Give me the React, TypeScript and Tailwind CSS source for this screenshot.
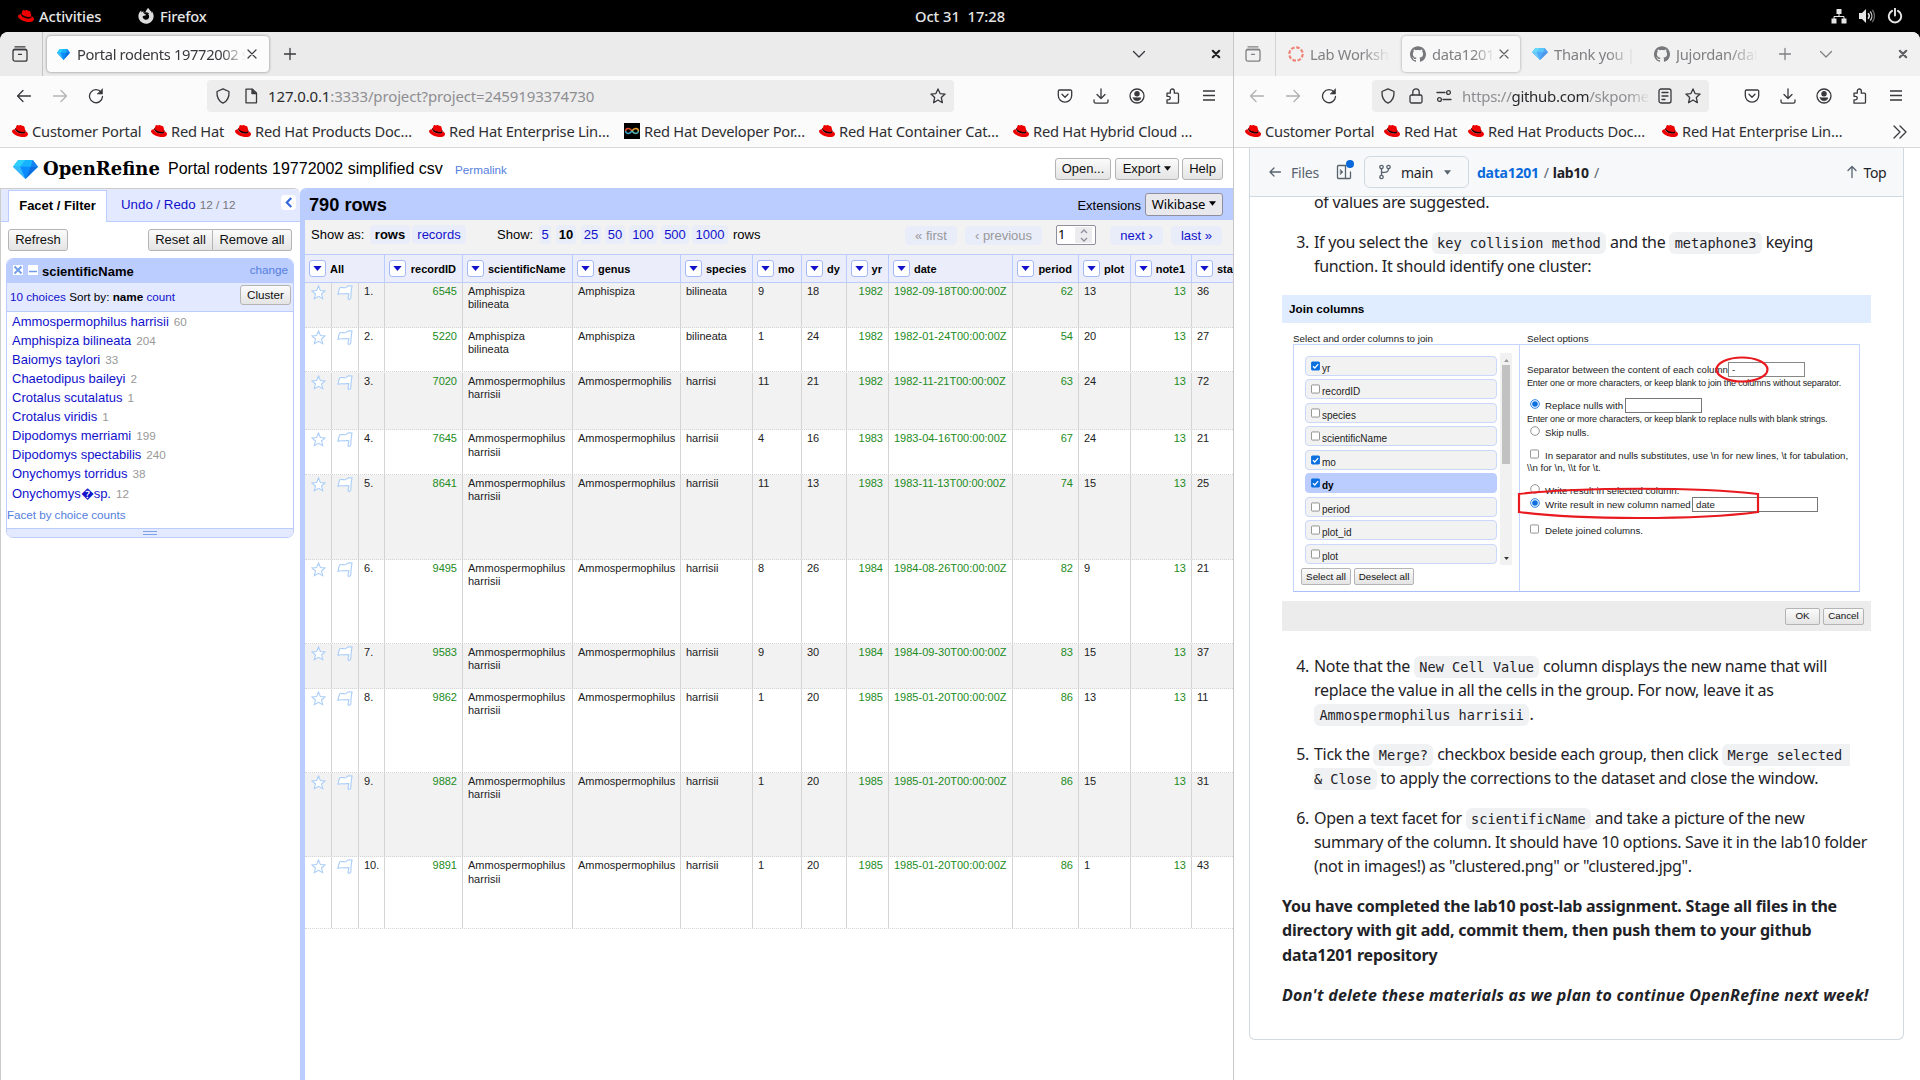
import React from "react";
import { FaFirefoxBrowser } from "react-icons/fa";
import { SiGithub } from "react-icons/si";

type P = { className?: string };

function Hat({ className = "" }: P) {
  return (
    <svg viewBox="0 0 24 24" className={`w-4 h-4 shrink-0 ${className}`}>
      <path d="M4.6 9C4.6 13 11 16.2 16 16.2c2.6 0 4.4-1 4.4-2.8L20 10.500 5 7.500z" fill="#1a0000" />
      <path
        fill="#ee0000"
        d="M16.009 13.386c1.577 0 3.86-.326 3.86-2.202a1.765 1.765 0 0 0-.04-.431l-.94-4.08c-.216-.898-.406-1.305-1.982-2.093-1.223-.625-3.888-1.658-4.676-1.658-.733 0-.947.946-1.822.946-.842 0-1.467-.706-2.255-.706-.757 0-1.25.515-1.63 1.576 0 0-1.06 2.99-1.197 3.424a.81.81 0 0 0-.028.245c0 1.162 4.577 4.974 10.71 4.974m4.101-1.435c.218 1.032.218 1.14.218 1.277 0 1.765-1.984 2.745-4.593 2.745-5.895.004-11.06-3.451-11.06-5.734a2.326 2.326 0 0 1 .19-.925C2.746 9.415 0 9.794 0 12.217c0 3.969 9.405 8.861 16.851 8.861 5.71 0 7.149-2.582 7.149-4.62 0-1.605-1.387-3.425-3.887-4.512"
      />
    </svg>
  );
}

function Diamond({ className = "" }: P) {
  return (
    <svg viewBox="0 0 24 20" preserveAspectRatio="none" className={`shrink-0 ${className}`}>
      <path d="M5 0h14l5 7-12 13L0 7z" fill="#1e9bff" />
      <path d="M5 0h7L7 7H0z" fill="#2bd0fb" />
      <path d="M12 0h7l-2 7H7z" fill="#16b4ff" />
      <path d="M19 0l5 7h-7z" fill="#1783f0" />
      <path d="M0 7h7l5 13z" fill="#35b9ff" />
      <path d="M7 7h10l-5 13z" fill="#0a8cff" />
      <path d="M17 7h7L12 20z" fill="#0b6fe0" />
    </svg>
  );
}

function Ic({ children, className = "", w = 1.3 }: { children: React.ReactNode; className?: string; w?: number }) {
  return (
    <svg viewBox="0 0 16 16" fill="none" stroke="currentColor" strokeWidth={w} strokeLinecap="round" strokeLinejoin="round" className={`w-4 h-4 shrink-0 ${className}`}>
      {children}
    </svg>
  );
}
const ViewIcon = (p: P) => (
  <Ic {...p}><path d="M3 .8h10M1.800 3.500h12.400" /><rect x="1" y="3.500" width="14" height="11.700" rx="2" /><path d="M6.500 8.300h3" /></Ic>
);
const Back = (p: P) => <Ic {...p}><path d="M1.500 8h13M7 2.500L1.500 8 7 13.500" /></Ic>;
const Fwd = (p: P) => <Ic {...p}><path d="M1.500 8h13M9 2.500L14.500 8 9 13.500" /></Ic>;
const Reload = (p: P) => (
  <Ic {...p}><path d="M13.200 4.300A6.500 6.500 0 1 0 14.500 8.500" /><path d="M14.500 1v5h-5z" fill="currentColor" strokeWidth={0.6} /></Ic>
);
const Shield = (p: P) => <Ic {...p}><path d="M8 .8l6 2.700c.3 5-1.200 9.500-6 11.700C3.200 13 1.700 8.500 2 3.500z" /></Ic>;
const Doc = (p: P) => <Ic {...p}><path d="M3 1.200h6.500L13.500 5v9.800H3z" /><path d="M9 1.500v4h4" fill="currentColor" /></Ic>;
const Lock = (p: P) => <Ic {...p}><rect x="2" y="7" width="12" height="8" rx="1.500" /><path d="M4.800 7V4a3.200 3.200 0 0 1 6.400 0v3" /></Ic>;
const Perm = (p: P) => (
  <Ic {...p}><path d="M1 4.500h8M7 11.500h8" /><circle cx="12.500" cy="4.500" r="1.900" /><circle cx="3.500" cy="11.500" r="1.900" /></Ic>
);
const Star = (p: P) => (
  <Ic {...p}><path d="M8 .9l2.100 4.700 5 .5-3.800 3.400 1.100 5.200L8 12l-4.400 2.700 1.100-5.200L.9 6.100l5-.5z" /></Ic>
);
const Pocket = (p: P) => <Ic {...p}><path d="M2.500 2h11a1.200 1.200 0 0 1 1.200 1.200V7.500a6.700 6.700 0 0 1-13.400 0V3.200A1.200 1.200 0 0 1 2.500 2z" /><path d="M5 6.300l3 3 3-3" /></Ic>;
const Down = (p: P) => <Ic {...p}><path d="M8 .8v9.500M4 6.500l4 4 4-4M1 12v1.500a1.700 1.700 0 0 0 1.700 1.700h10.600A1.700 1.700 0 0 0 15 13.500V12" /></Ic>;
const Account = (p: P) => (
  <Ic {...p}><circle cx="8" cy="8" r="7" /><circle cx="8" cy="5.800" r="2.100" fill="currentColor" /><path d="M4.200 9.800h7.600c-.3 2-1.800 3-3.800 3s-3.500-1-3.800-3z" fill="currentColor" strokeWidth={0.6} /></Ic>
);
const Ext = (p: P) => (
  <Ic {...p}><path d="M2 5.200h3.300V3a2 2 0 1 1 4 0v2.200h3.200a1 1 0 0 1 1 1v8a1 1 0 0 1-1 1H2v-3.400h1.500a1.700 1.700 0 0 0 0-3.500H2z" /></Ic>
);
const Menu = (p: P) => <Ic {...p}><path d="M2 3h12M2 7.500h12M2 12h12" strokeLinecap="butt" /></Ic>;
const Plus = (p: P) => <Ic {...p}><path d="M2.500 8h11M8 2.500v11" /></Ic>;
const Chev = (p: P) => <Ic {...p}><path d="M2.500 5.500L8 11l5.500-5.500" /></Ic>;
const X = (p: P) => <Ic w={1.2} {...p}><path d="M4 4l8 8M12 4l-8 8" /></Ic>;
const XB = (p: P) => <Ic w={2.2} {...p}><path d="M4.800 4.800l6.400 6.400M11.200 4.800l-6.400 6.400" /></Ic>;

function Bookmark({ label, dark, className = "" }: { label: string; dark?: boolean; className?: string }) {
  return (
    <div className={`flex items-center gap-1 shrink-0 text-[14.700px] tracking-[-0.230px] text-[#2f2f33] ${className}`}>
      {dark ? (
        <svg viewBox="0 0 16 16" className="w-4 h-4 shrink-0">
          <rect width="16" height="16" fill="#000" />
          <path d="M8 8C6 5 2 4.500 1.600 8" fill="none" stroke="#e8502f" strokeWidth="1.400" />
          <path d="M1.600 8c.4 3.500 4.400 3 6.400 0" fill="none" stroke="#3aa6c9" strokeWidth="1.400" />
          <path d="M8 8c2-3 6-3.500 6.400 0" fill="none" stroke="#f0a432" strokeWidth="1.400" />
          <path d="M14.400 8c-.4 3.500-4.400 3-6.400 0" fill="none" stroke="#57b8b0" strokeWidth="1.400" />
        </svg>
      ) : (
        <Hat />
      )}
      <span className="whitespace-nowrap">{label}</span>
    </div>
  );
}

function TopBar() {
  return (
    <div className="h-8 bg-black text-[#e6e6e6] text-[14.700px] font-medium grid grid-cols-[1fr_auto_1fr] items-center shrink-0">
      <div className="flex items-center pl-[18px]">
        <Hat />
        <span className="ml-[5px] w-[99px] tracking-[-0.100px]">Activities</span>
        <FaFirefoxBrowser className="w-4 h-4 text-[#dcdcdc]" />
        <span className="ml-[6px] tracking-[-0.200px]">Firefox</span>
      </div>
      <span className="whitespace-pre">Oct 31  17:28</span>
      <div className="flex items-center justify-end gap-3 pr-[17px]">
        <svg viewBox="0 0 16 16" className="w-4 h-4"><path d="M5.500 1h5v5h-5zM.500 10.500h5v5h-5zM10.500 10.500h5v5h-5z" fill="#e6e6e6" /><path d="M8 5v4M3 11V8.500h10V11" fill="none" stroke="#e6e6e6" /></svg>
        <svg viewBox="0 0 16 16" className="w-4 h-4"><path d="M0 5h3l4-4v14l-4-4H0z" fill="#e6e6e6" /><path d="M9 5.300a4 4 0 0 1 0 5.400" fill="none" stroke="#e6e6e6" strokeWidth="1.600" /><path d="M11.200 3.500a7 7 0 0 1 0 9" fill="none" stroke="#bdbdbd" strokeWidth="1.400" /><path d="M13.300 1.800a10 10 0 0 1 0 12.400" fill="none" stroke="#6a6a6a" strokeWidth="1.300" /></svg>
        <svg viewBox="0 0 16 16" className="w-4 h-4"><path d="M5 2.800a6.200 6.200 0 1 0 6 0M8 .5v7" fill="none" stroke="#e6e6e6" strokeWidth="1.900" strokeLinecap="round" /></svg>
      </div>
    </div>
  );
}

const fade = "shrink-0 tracking-[-0.250px] overflow-hidden whitespace-nowrap [mask-image:linear-gradient(to_right,#000_65%,transparent)]";

function LeftChrome() {
  return (
    <div className="shrink-0 text-[#38383d]">
      <div className="flex h-11 items-center bg-[#ebebeb] rounded-tl-lg">
        <div className="w-[43px] h-full pl-3 flex items-center border-r border-[#c4c4c4]"><ViewIcon /></div>
        <div className="ml-1 w-[222px] h-9 rounded bg-[#fcfcfc] shadow-[0_0_3px_rgba(0,0,0,0.450)] flex items-center pl-[10px]">
          <Diamond className="w-[13px] h-[11px]" />
          <div className="ml-[7px] w-[169px] shrink-0 text-[14.700px] tracking-[-0.350px] overflow-hidden whitespace-nowrap [mask-image:linear-gradient(to_right,#000_85%,transparent)]">Portal rodents 19772002 si</div>
          <X className="-ml-[2px]" />
        </div>
        <Plus className="ml-[13px]" />
        <Chev className="ml-auto" />
        <XB className="ml-[61px] mr-[9px] text-[#222]" />
      </div>
      <div className="flex h-10 items-center bg-[#fbfbfb] pl-4 pr-4">
        <Back />
        <Fwd className="ml-5 text-[#b5b5b8]" />
        <Reload className="ml-5" />
        <div className="ml-[103px] w-[747px] h-8 rounded bg-[#ededed] flex items-center pl-2">
          <Shield />
          <Doc className="ml-3" />
          <div className="ml-[9px] text-[15px] tracking-[-0.140px] whitespace-nowrap">
            <span className="text-[#2a2a2e]">127.0.0.1</span><span className="text-[#8e8e92]">:3333/project?project=2459193374730</span>
          </div>
          <Star className="ml-auto mr-2" />
        </div>
        <div className="flex gap-5 ml-auto"><Pocket /><Down /><Account /><Ext /><Menu /></div>
      </div>
      <div className="flex h-8 items-center bg-[#fbfbfb] border-b border-[#d9d9d9] pl-3">
        <Bookmark label="Customer Portal" className="w-[139px]" />
        <Bookmark label="Red Hat" className="w-[84px]" />
        <Bookmark label="Red Hat Products Doc…" className="w-[194px]" />
        <Bookmark label="Red Hat Enterprise Lin…" className="w-[195px]" />
        <Bookmark label="Red Hat Developer Por…" className="w-[195px]" dark />
        <Bookmark label="Red Hat Container Cat…" className="w-[194px]" />
        <Bookmark label="Red Hat Hybrid Cloud …" />
      </div>
    </div>
  );
}

function Btn({ children, size = "h-[22px] text-[13px] rounded-[3px]", className = "" }: { children: React.ReactNode; size?: string; className?: string }) {
  return (
    <div className={`flex items-center justify-center border border-[#b4b4b4] bg-gradient-to-b from-[#fbfbfb] to-[#e4e4e4] text-[#111] whitespace-nowrap shrink-0 ${size} ${className}`}>
      {children}
    </div>
  );
}
const small = "h-[17px] text-[9.800px] rounded-[2px]";
const Caret = ({ className = "" }: P) => (
  <svg viewBox="0 0 8 5" className={`w-[7px] h-[5px] ${className}`}><path d="M0 0h8L4 5z" fill="currentColor" /></svg>
);

const choices: [string, string][] = [
  ["Ammospermophilus harrisii", "60"], ["Amphispiza bilineata", "204"], ["Baiomys taylori", "33"], ["Chaetodipus baileyi", "2"],
  ["Crotalus scutalatus", "1"], ["Crotalus viridis", "1"], ["Dipodomys merriami", "199"], ["Dipodomys spectabilis", "240"],
  ["Onychomys torridus", "38"], ["Onychomys\uFFFDsp.", "12"],
];

function FacetPanel() {
  return (
    <div className="w-[300px] shrink-0 border-l border-t border-[#ccc] rounded-tr-md flex flex-col">
      <div className="flex h-[33px] bg-[#e3e9ff] border-b border-[#bbccff] shrink-0 rounded-tr-md">
        <div className="ml-[7px] mt-[1px] w-[99px] h-8 bg-white border border-b-0 border-[#bbccff] flex items-center justify-center text-[13px] font-bold pb-px">Facet / Filter</div>
        <div className="ml-[14px] flex items-center text-[13.300px] text-[#1111cc]">Undo / Redo<span className="ml-1 text-[11.700px] text-[#777]">12 / 12</span></div>
        <div className="ml-auto mr-[4px] mt-[6px] w-[15px] h-[15px] bg-white rounded-sm flex items-center justify-center">
          <svg viewBox="0 0 9 12" className="w-[8px] h-[11px]"><path d="M7 1L2 6l5 5" fill="none" stroke="#3366dd" strokeWidth="2.400" /></svg>
        </div>
      </div>
      <div className="flex mt-[7px] pl-[7px] pr-[8px]">
        <Btn className="w-[60px]">Refresh</Btn>
        <Btn className="w-[65px] ml-auto rounded-r-none">Reset all</Btn>
        <Btn className="w-[79px] rounded-l-none border-l-0">Remove all</Btn>
      </div>
      <div className="mt-[7px] ml-[5px] w-[288px] h-[280px] rounded-[7px] border border-[#bbccff] flex flex-col overflow-hidden">
        <div className="h-6 bg-[#bbccff] flex items-center pl-[6px] pr-[5px] shrink-0">
          <svg viewBox="0 0 10 10" className="w-[10px] h-[10px] -mt-[3px]"><rect width="10" height="10" fill="#fff" /><path d="M1.500 1.500l7 7M8.500 1.500l-7 7" stroke="#6f9be8" strokeWidth="1.800" /></svg>
          <svg viewBox="0 0 10 10" className="w-[10px] h-[10px] ml-[5px] -mt-[3px]"><rect width="10" height="10" fill="#fff" /><path d="M1 6.500h8" stroke="#6f9be8" strokeWidth="1.600" /></svg>
          <span className="ml-[4px] mt-px text-[13px] font-bold">scientificName</span>
          <span className="ml-auto -mt-[2px] text-[11.700px] text-[#5580dd]">change</span>
        </div>
        <div className="h-[29px] bg-[#e3e9ff] border-b border-[#bbccff] flex items-center pl-[3px] pr-[2px] text-[11.700px] shrink-0">
          <span className="whitespace-pre"><span className="text-[#1111cc]">10 choices</span> Sort by: <b>name</b> <span className="text-[#1111cc]">count</span></span>
          <Btn className="ml-auto -mt-[4px] w-[51px]" size="h-[20px] text-[11.700px] rounded-[3px]">Cluster</Btn>
        </div>
        <div className="pl-[5px] text-[13px]">
          {choices.map(([n, c], i) => (
            <div key={n} className={`h-[19px] leading-[19px] text-[#1111cc] whitespace-nowrap ${i === 9 ? "mt-px" : ""}`}>
              {n}<span className="ml-[5px] text-[11.700px] text-[#999]">{c}</span>
            </div>
          ))}
        </div>
        <div className="mt-[4px] text-[11.700px] leading-4 text-[#5580dd] tracking-[-0.050px]">Facet by choice counts</div>
        <div className="mt-auto h-[9px] bg-[#e3e9ff] border-t border-[#bbccff] flex flex-col items-center gap-[2px] pt-[2px] shrink-0">
          <div className="w-[14px] h-px bg-[#7fa3ea]" /><div className="w-[14px] h-px bg-[#7fa3ea]" />
        </div>
      </div>
    </div>
  );
}

const cols: { n: string; w: string; r?: boolean }[] = [
  { n: "recordID", w: "w-[78px]", r: true }, { n: "scientificName", w: "w-[110px]" }, { n: "genus", w: "w-[108px]" },
  { n: "species", w: "w-[72px]" }, { n: "mo", w: "w-[49px]" }, { n: "dy", w: "w-[45px]" }, { n: "yr", w: "w-[42px]", r: true },
  { n: "date", w: "w-[124px]" }, { n: "period", w: "w-[66px]", r: true }, { n: "plot", w: "w-[52px]" },
  { n: "note1", w: "w-[61px]", r: true }, { n: "station", w: "w-[80px]" },
];
const green = new Set([0, 6, 7, 8, 10]);
const A = "Ammospermophilus";
const rows: { h: string; v: string[]; lh?: string }[] = [
  { h: "h-[45px]", v: ["6545", "Amphispiza bilineata", "Amphispiza", "bilineata", "9", "18", "1982", "1982-09-18T00:00:00Z", "62", "13", "13", "36"] },
  { h: "h-[44px]", v: ["5220", "Amphispiza bilineata", "Amphispiza", "bilineata", "1", "24", "1982", "1982-01-24T00:00:00Z", "54", "20", "13", "27"] },
  { h: "h-[58px] pt-px", v: ["7020", A + " harrisii", "Ammospermophilis", "harrisi", "11", "21", "1982", "1982-11-21T00:00:00Z", "63", "24", "13", "72"] },
  { h: "h-[45px]", lh: "leading-[14px] -mt-px", v: ["7645", A + " harrisii", A, "harrisii", "4", "16", "1983", "1983-04-16T00:00:00Z", "67", "24", "13", "21"] },
  { h: "h-[85px]", v: ["8641", A + " harrisii", A, "harrisii", "11", "13", "1983", "1983-11-13T00:00:00Z", "74", "15", "13", "25"] },
  { h: "h-[84px]", v: ["9495", A + " harrisii", A, "harrisii", "8", "26", "1984", "1984-08-26T00:00:00Z", "82", "9", "13", "21"] },
  { h: "h-[45px]", v: ["9583", A + " harrisii", A, "harrisii", "9", "30", "1984", "1984-09-30T00:00:00Z", "83", "15", "13", "37"] },
  { h: "h-[84px]", v: ["9862", A + " harrisii", A, "harrisii", "1", "20", "1985", "1985-01-20T00:00:00Z", "86", "13", "13", "11"] },
  { h: "h-[84px]", v: ["9882", A + " harrisii", A, "harrisii", "1", "20", "1985", "1985-01-20T00:00:00Z", "86", "15", "13", "31"] },
  { h: "h-[72px]", lh: "leading-[14px] -mt-px", v: ["9891", A + " harrisii", A, "harrisii", "1", "20", "1985", "1985-01-20T00:00:00Z", "86", "1", "13", "43"] },
];

function DropBtn() {
  return (
    <div className="w-[17px] h-[17px] shrink-0 rounded-[3px] border border-[#a3b8f5] bg-white flex items-center justify-center">
      <svg viewBox="0 0 10 6" className="w-[9px] h-[5px]"><path d="M0 0h10L5 6z" fill="#1111cc" /></svg>
    </div>
  );
}

const pill = "h-[19px] rounded-[4px] bg-[#e9edf9] flex items-center justify-center text-[#1111cc] shrink-0";

function DataPanel() {
  return (
    <div className="flex-1 min-w-0 flex flex-col border-l-[5px] border-[#bbccff] rounded-tl-md overflow-hidden text-[13px]">
      <div className="h-8 bg-[#bbccff] flex items-center pl-[4px] pr-[10px] shrink-0">
        <span className="text-[18.200px] font-bold mt-[3px]">790 rows</span>
        <span className="ml-auto mt-[3px]">Extensions</span>
        <div className="ml-1 w-[78px] h-[23px] rounded-[3px] border border-[#8f8f9d] bg-[#e9e9ed] flex items-center justify-center gap-1 font-['Noto_Sans',sans-serif] text-[13px] tracking-[-0.150px] mt-[1px]">Wikibase<Caret className="-mt-0.5" /></div>
      </div>
      <div className="h-[34px] bg-[#f2f2f2] flex items-center shrink-0 pl-[6px] pr-[11px] pb-[5px] whitespace-nowrap">
        <span className="w-[59px]">Show as:</span>
        <div className={`${pill} w-[40px] !text-black font-bold`}>rows</div>
        <div className={`${pill} w-[54px] ml-[2px]`}>records</div>
        <span className="ml-[31px] w-[42px]">Show:</span>
        <div className={`${pill} w-[12px]`}>5</div>
        <div className={`${pill} w-[20px] ml-[5px] !text-black font-bold`}>10</div>
        <div className={`${pill} w-[20px] ml-[5px]`}>25</div>
        <div className={`${pill} w-[20px] ml-[4px]`}>50</div>
        <div className={`${pill} w-[28px] ml-[4px]`}>100</div>
        <div className={`${pill} w-[28px] ml-[4px]`}>500</div>
        <div className={`${pill} w-[36px] ml-[3px]`}>1000</div>
        <span className="ml-[5px]">rows</span>
        <div className={`${pill} w-[52px] ml-auto mt-[2px] !text-[#999]`}>« first</div>
        <div className={`${pill} w-[77px] ml-[8px] mt-[2px] !text-[#999]`}>‹ previous</div>
        <div className="ml-[14px] w-[40px] h-[20px] bg-white border border-[#8f8f9d] rounded-[2px] flex items-center mt-px font-['Noto_Sans',sans-serif] text-[13px] pl-px pr-[3px] shrink-0">
          1
          <div className="ml-auto w-[17px] h-[16px] bg-[#ececee] flex items-center justify-center">
            <svg viewBox="0 0 8 13" className="w-2 h-[13px]"><path d="M1 4l3-3 3 3M1 9l3 3 3-3" fill="none" stroke="#8f8f9d" strokeWidth="1.400" /></svg>
          </div>
        </div>
        <div className={`${pill} w-[53px] ml-[14px] mt-[2px]`}>next ›</div>
        <div className={`${pill} w-[51px] ml-[8px] mt-[2px]`}>last »</div>
      </div>
      <div className="flex h-[29px] shrink-0 border-y border-[#bbccff] bg-[#ebeefa] font-bold text-[11px]">
        <div className="w-[80px] shrink-0 border-r border-[#bbccff] flex items-center pl-1 gap-1">
          <DropBtn /><span className="mt-px">All</span>
        </div>
        {cols.map((c) => (
          <div key={c.n} className={`${c.w} shrink-0 border-r border-[#bbccff] flex items-center pl-1 pr-[6px] ${c.r ? "justify-between" : "gap-[4px]"}`}>
            <DropBtn /><span className="mt-px">{c.n}</span>
          </div>
        ))}
      </div>
      {rows.map((r, i) => (
        <div key={i} className={`flex ${r.h} shrink-0 border-b border-dotted border-[#d5d5d5] text-[11px] leading-[13px] text-[#222] ${i % 2 === 0 && "bg-[#f2f2f2]"}`}>
          <div className="w-[27px] shrink-0 border-r border-[#d4d4d4] flex justify-center pt-[2px]">
            <svg viewBox="0 0 16 16" className="w-[15px] h-[15px]"><path d="M8 1l2 4.900 5 .4-3.800 3.300 1.300 5L8 12l-4.500 2.600 1.300-5L1 6.300l5-.4z" fill="#fff" stroke="#a9cdf8" strokeWidth="1.100" /></svg>
          </div>
          <div className="w-[27px] shrink-0 border-r border-[#d4d4d4] flex justify-center pt-[2px]">
            <svg viewBox="0 0 16 16" className="w-[16px] h-[16px]"><path d="M2.800 2.800C5 1.800 7 3.500 9 2.400L11.500.8l3.500.2-.8 5-.4 6.500c0 1.800-2.800 2.800-2.800.8l.9-4.600L9.700 8.500C7 9.500 4 8 1 9.300L1.600 6z" fill="#fff" stroke="#a9cdf8" strokeWidth="1.100" /></svg>
          </div>
          <div className="w-[26px] shrink-0 border-r border-[#d4d4d4] pl-[5px] pt-[2px]">{i + 1}.</div>
          {cols.map((c, j) => (
            <div key={j} className={`${c.w} shrink-0 border-r border-[#d4d4d4] pl-[5px] pr-[5px] pt-[2px] ${c.r ? "text-right" : ""} ${green.has(j) ? "text-[#228b22]" : ""}`}>
              <div className={r.lh}>{r.v[j]}</div>
            </div>
          ))}
        </div>
      ))}
    </div>
  );
}

function LeftWindow() {
  return (
    <div className="w-[1234px] h-full flex flex-col border-r border-[#c8c8c8] rounded-tl-lg bg-white overflow-hidden">
      <LeftChrome />
      <div className="flex flex-col flex-1 font-['Liberation_Sans',Arial,sans-serif] text-black">
        <div className="h-10 flex items-center pl-[13px] pr-[10px] pt-px shrink-0">
          <Diamond className="w-[25px] h-[19px] mt-[2px]" />
          <span className="ml-[5px] w-[125px] font-['DejaVu_Serif',serif] font-bold text-[18px] -mt-[1px]">OpenRefine</span>
          <span className="text-[16px] w-[287px] whitespace-nowrap">Portal rodents 19772002 simplified csv</span>
          <span className="text-[11.700px] text-[#5580dd] mt-[3px]">Permalink</span>
          <Btn className="w-[56px] ml-auto">Open...</Btn>
          <Btn className="w-[64px] ml-1 gap-1">Export<Caret /></Btn>
          <Btn className="w-[41px] ml-[3px]">Help</Btn>
        </div>
        <div className="flex flex-1 min-h-0">
          <FacetPanel />
          <DataPanel />
        </div>
      </div>
    </div>
  );
}

function RightChrome() {
  return (
    <div className="shrink-0 text-[#38383d]">
      <div className="flex h-11 items-center bg-[#f1f1f1] text-[14.700px] text-[#808084]">
        <div className="w-[42px] h-full pl-[11px] flex items-center border-r border-[#d4d4d4] shrink-0"><ViewIcon /></div>
        <svg viewBox="0 0 16 16" className="w-4 h-4 ml-3 shrink-0"><circle cx="8" cy="8" r="6.700" fill="none" stroke="#ee8578" strokeWidth="2.200" strokeDasharray="3.600 1.660" /></svg>
        <div className={`ml-[6px] w-[80px] ${fade}`}>Lab Worksho</div>
        <div className="ml-[12px] w-[118px] h-9 rounded bg-[#f8f8f8] shadow-[0_0_3px_rgba(0,0,0,0.350)] flex items-center pl-2 shrink-0">
          <SiGithub className="w-4 h-4 shrink-0 text-[#77787b]" />
          <div className={`ml-[6px] w-[64px] ${fade}`}>data1201/l</div>
          <X className="text-[#606064]" />
        </div>
        <Diamond className="w-4 h-3 ml-3 opacity-70" />
        <div className={`ml-[6px] w-[82px] ${fade}`}>Thank you | O</div>
        <SiGithub className="w-4 h-4 ml-[18px] shrink-0 text-[#77787b]" />
        <div className={`ml-[6px] w-[82px] ${fade}`}>Jujordan/dat</div>
        <Plus className="ml-[19px]" />
        <Chev className="ml-[25px]" />
        <XB className="ml-auto mr-[9px] text-[#606064]" />
      </div>
      <div className="flex h-10 items-center bg-[#fbfbfb] pl-[15px] pr-4">
        <Back className="text-[#b0b0b3]" />
        <Fwd className="ml-5 text-[#b0b0b3]" />
        <Reload className="ml-5" />
        <div className="ml-[35px] w-[337px] h-8 rounded bg-[#ededed] flex items-center pl-2">
          <Shield />
          <Lock className="ml-3" />
          <Perm className="ml-3" />
          <div className="ml-[10px] w-[188px] shrink-0 text-[15px] tracking-[-0.280px] text-[#8e8e92] overflow-hidden whitespace-nowrap [mask-image:linear-gradient(to_right,#000_88%,transparent)]">
            https://<span className="text-[#2a2a2e]">github.com</span>/skpome
          </div>
          <Ic className="ml-[7px]"><rect x="2" y="1" width="12" height="14" rx="2" /><path d="M5 4.500h6M5 8h6M5 11.500h3" /></Ic>
          <Star className="ml-auto mr-2" />
        </div>
        <div className="flex gap-5 ml-auto"><Pocket /><Down /><Account /><Ext /><Menu /></div>
      </div>
      <div className="flex h-8 items-center bg-[#fbfbfb] border-b border-[#d9d9d9] pl-[11px]">
        <Bookmark label="Customer Portal" className="w-[139px]" />
        <Bookmark label="Red Hat" className="w-[84px]" />
        <Bookmark label="Red Hat Products Doc…" className="w-[194px]" />
        <Bookmark label="Red Hat Enterprise Lin…" />
        <Ic className="ml-auto mr-[12px]"><path d="M2 2l6 6-6 6M8 2l6 6-6 6" /></Ic>
      </div>
    </div>
  );
}

function Code({ children, className = "" }: { children: React.ReactNode; className?: string }) {
  return <code className={`font-['DejaVu_Sans_Mono',monospace] text-[13.600px] leading-none tracking-normal bg-[#eff1f3] rounded-md px-[5.400px] py-[3px] ${className}`}>{children}</code>;
}

function Check({ on, className = "" }: { on?: boolean; className?: string }) {
  return (
    <svg viewBox="0 0 10 10" className={`w-[9px] h-[10px] shrink-0 ${className}`}>
      <rect x=".5" y=".5" width="9" height="9" rx="1" fill={on ? "#0b6fe0" : "#fff"} stroke={on ? "#0b6fe0" : "#888"} />
      {on && <path d="M2.200 5.200l2 2L8 3" fill="none" stroke="#fff" strokeWidth="1.400" />}
    </svg>
  );
}
function Radio({ on }: { on?: boolean }) {
  return (
    <svg viewBox="0 0 10 10" className="w-[10px] h-[10px] shrink-0 ml-[3px] mr-[5px] -mt-[4px]">
      <circle cx="5" cy="5" r="4.300" fill="#fff" stroke={on ? "#0b6fe0" : "#888"} strokeWidth=".9" />
      {on && <circle cx="5" cy="5" r="2.800" fill="#0b6fe0" />}
    </svg>
  );
}

const joinCols: [string, boolean][] = [
  ["yr", true], ["recordID", false], ["species", false], ["scientificName", false], ["mo", true], ["dy", true], ["period", false], ["plot_id", false], ["plot", false],
];

function JoinDialog() {
  return (
    <div className="relative w-[589px] h-[336px] tracking-normal bg-white flex flex-col font-['Liberation_Sans',Arial,sans-serif] text-[9.700px] leading-[12px] text-[#222] whitespace-nowrap">
      <div className="h-7 bg-[#e0ecff] flex items-center pl-[7px] text-[11.700px] font-bold text-black shrink-0">Join columns</div>
      <div className="flex h-[21px] items-end pl-[11px] shrink-0 text-[9.800px]">
        <span className="w-[234px] -mb-px">Select and order columns to join</span>
        <span className="-mb-px">Select options</span>
      </div>
      <div className="ml-[11px] w-[567px] h-[248px] border border-[#c5d5ff] border-b-[#a9c0fb] flex shrink-0">
        <div className="w-[226px] border-r border-[#c5d5ff]">
          <div className="flex h-[212px] mt-[8px] pl-[11px]">
            <div className="w-[192px] pt-[3px] flex flex-col gap-[3.450px]">
              {joinCols.map(([n, on]) => (
                <div key={n} className={`h-5 shrink-0 rounded-[4px] border flex pl-[5px] ${n === "dy" ? "bg-[#bbccff] border-[#bbccff] font-bold text-black" : "bg-[#f2f2f2] border-[#cad8fb]"}`}>
                  <Check on={on} className="mt-[4px]" />
                  <span className="ml-[2px] mt-[6px] text-[10px]">{n}</span>
                </div>
              ))}
            </div>
            <div className="ml-[3px] w-[12px] bg-[#f1f1f1] flex flex-col items-center">
              <Caret className="!w-[5px] !h-[3px] mt-[6px] rotate-180 text-[#999]" />
              <div className="w-[8px] h-[99px] mt-[3px] bg-[#c1c1c1]" />
              <Caret className="!w-[5px] !h-[3px] mt-auto mb-[5px] text-[#333]" />
            </div>
          </div>
          <div className="flex mt-[3px] pl-[7px] gap-[3px]">
            <Btn className="w-[50px]" size={small}>Select all</Btn>
            <Btn className="w-[60px]" size={small}>Deselect all</Btn>
          </div>
        </div>
        <div className="pl-[7px] pt-[17px] flex flex-col [&>div]:flex [&>div]:items-center">
          <div className="h-[15px]"><span className="w-[201px]">Separator between the content of each column</span><div className="w-[77px] h-[15px] border border-[#888] bg-white pl-[3px] leading-[13px]">-</div></div>
          <div className="h-[10px] text-[9px] tracking-[-0.160px] mt-px">Enter one or more characters, or keep blank to join the columns without separator.</div>
          <div className="h-[15px] mt-[10px]"><Radio on /><span className="w-[80px]">Replace nulls with</span><div className="w-[77px] h-[15px] border border-[#777] bg-white" /></div>
          <div className="h-[10px] text-[9px] tracking-[-0.160px] mt-px">Enter one or more characters, or keep blank to replace nulls with blank strings.</div>
          <div className="h-[12px] mt-[3px]"><Radio /><span>Skip nulls.</span></div>
          <div className="h-[12px] mt-[11px]"><Check className="ml-[3px] mr-[6px] -mt-[4px]" />In separator and nulls substitutes, use \n for new lines, \t for tabulation,</div>
          <div className="h-[12px]">\\n for \n, \\t for \t.</div>
          <div className="h-[12px] mt-[11px]"><Radio /><span>Write result in selected column.</span></div>
          <div className="h-[15px]"><Radio on /><span className="w-[147px]">Write result in new column named</span><div className="w-[126px] h-[15px] border border-[#777] bg-white pl-[3px] leading-[14px]">date</div></div>
          <div className="h-[12px] mt-[13px]"><Check className="ml-[3px] mr-[6px] -mt-[4px]" />Delete joined columns.</div>
        </div>
      </div>
      <div className="mt-auto h-[30px] bg-[#ececec] flex items-center justify-end gap-[3px] pr-[7px]">
        <Btn className="w-[35px]" size={small}>OK</Btn>
        <Btn className="w-[41px]" size={small}>Cancel</Btn>
      </div>
      <svg viewBox="0 0 589 336" className="absolute inset-0 w-full h-full">
        <ellipse cx="460" cy="74.500" rx="25.500" ry="12" fill="none" stroke="#e8191f" strokeWidth="2.200" />
        <path d="M237 199c60-7 180-7 239 0v18c-60 8-180 8-239 0z" fill="none" stroke="#e8191f" strokeWidth="2.200" />
      </svg>
    </div>
  );
}

function Item({ n, children, className = "" }: { n: string; children: React.ReactNode; className?: string }) {
  return (
    <div className={`flex ${className}`}>
      <span className="w-[32px] pr-[5px] text-right shrink-0">{n}</span>
      <div>{children}</div>
    </div>
  );
}

function RightWindow() {
  return (
    <div className="flex-1 h-full min-w-0 flex flex-col bg-white rounded-tr-lg overflow-hidden">
      <RightChrome />
      <div className="ml-[15px] w-[655px] h-[892px] border-x border-b border-[#d1d9e0] rounded-b-md text-[#1f2328] flex flex-col">
        <div className="h-[49px] shrink-0 bg-[#f6f8fa] border-b border-[#d1d9e0] flex items-center pl-[17px] text-[14px] tracking-[-0.250px] relative z-10">
          <Ic className="text-[#59636e]"><path d="M3 8h10.500M7 4L3 8l4 4" /></Ic>
          <span className="ml-[8px] w-[46px] text-[#59636e]">Files</span>
          <div className="relative w-4 h-4 -ml-px">
            <Ic className="text-[#59636e]"><path d="M10 1.500H2.500a1 1 0 0 0-1 1v11a1 1 0 0 0 1 1h11a1 1 0 0 0 1-1V8M9.500 2v12" /><path d="M4.500 5.500L7 8l-2.500 2.500z" fill="currentColor" strokeWidth={0.5} /></Ic>
            <div className="absolute -top-[4px] left-[10px] w-2 h-2 rounded-full bg-[#0969da]" />
          </div>
          <div className="ml-[12px] w-[105px] h-8 rounded-md border border-[#d1d9e0] flex items-center pl-[12px]">
            <Ic className="text-[#59636e]"><circle cx="4.500" cy="3" r="1.700" /><circle cx="4.500" cy="13" r="1.700" /><circle cx="11.500" cy="3" r="1.700" /><path d="M4.500 5v6M11.500 5c0 3-2 3.500-7 3.500" /></Ic>
            <span className="ml-[8px] w-[43px]">main</span>
            <Caret className="text-[#59636e]" />
          </div>
          <span className="ml-[8px] font-bold text-[#0969da]">data1201</span>
          <span className="ml-[5px] text-[#59636e]">/</span>
          <span className="ml-[4px] font-bold">lab10</span>
          <span className="ml-[5px] text-[#59636e]">/</span>
          <Ic className="ml-auto text-[#59636e]"><path d="M8 13.500V2.500M4 6.500l4-4 4 4" /></Ic>
          <span className="ml-[4px] mr-[17px] tracking-[-0.500px]">Top</span>
        </div>
        <div className="pl-[32px] text-[16px] leading-6 tracking-[-0.310px] whitespace-nowrap -mt-[7px]">
          <div className="pl-8">of values are suggested.</div>
          <Item n="3." className="mt-4">If you select the <Code>key collision method</Code> and the <Code>metaphone3</Code> keying<br />function. It should identify one cluster:</Item>
          <div className="mt-[17px]"><JoinDialog /></div>
          <Item n="4." className="mt-[23px]">Note that the <Code>New Cell Value</Code> column displays the new name that will<br />replace the value in all the cells in the group. For now, leave it as<br /><Code>Ammospermophilus harrisii</Code>.</Item>
          <Item n="5." className="mt-4">Tick the <Code>Merge?</Code> checkbox beside each group, then click <Code className="rounded-r-none whitespace-pre !pr-0">Merge selected </Code><br /><Code className="rounded-l-none !pl-0">&amp; Close</Code> to apply the corrections to the dataset and close the window.</Item>
          <Item n="6." className="mt-4">Open a text facet for <Code>scientificName</Code> and take a picture of the new<br />summary of the column. It should have 10 options. Save it in the lab10 folder<br />(not in images!) as "clustered.png" or "clustered.jpg".</Item>
          <div className="mt-4 font-bold leading-[24.400px] tracking-[-0.220px]">You have completed the lab10 post-lab assignment. Stage all files in the<br />directory with git add, commit them, then push them to your github<br />data1201 repository</div>
          <div className="mt-4 font-bold italic tracking-[0.250px]">Don't delete these materials as we plan to continue OpenRefine next week!</div>
        </div>
      </div>
    </div>
  );
}

export default function App() {
  return (
    <div className="w-[1920px] h-[1080px] bg-black flex flex-col overflow-hidden font-['Noto_Sans',sans-serif]">
      <TopBar />
      <div className="flex flex-1 min-h-0">
        <LeftWindow />
        <RightWindow />
      </div>
    </div>
  );
}
